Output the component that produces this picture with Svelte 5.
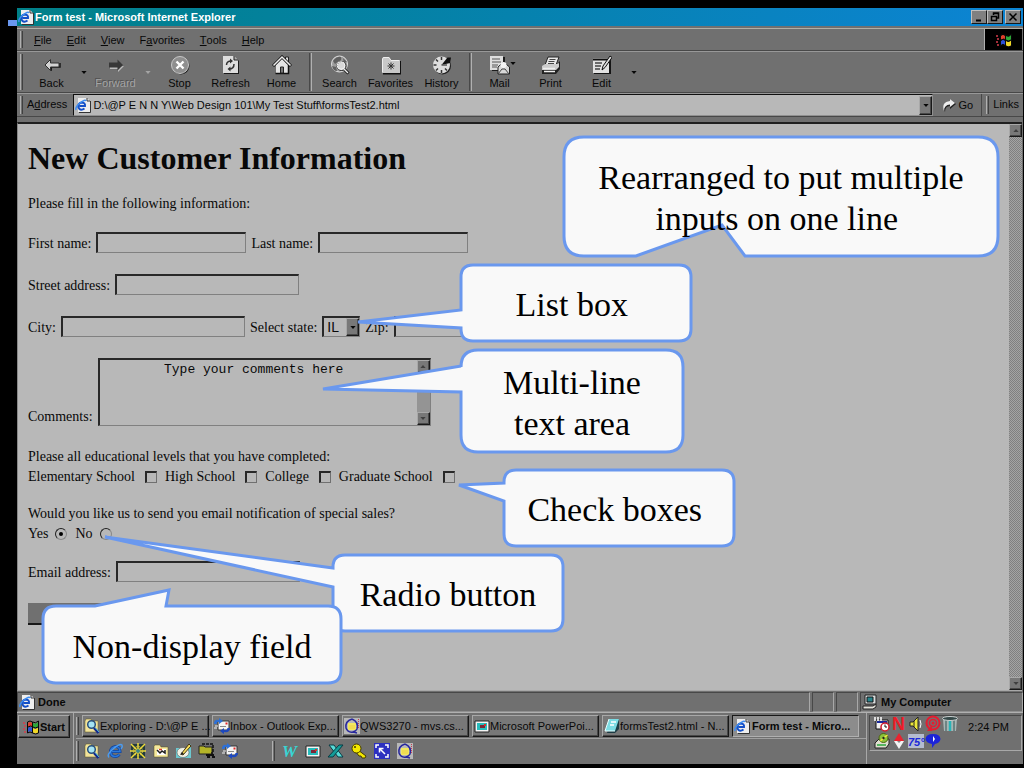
<script lang="ts">
	let state = $state('IL');
	let notify = $state('yes');
	let address = $state('D:\\@P E N N Y\\Web Design 101\\My Test Stuff\\formsTest2.html');
	let comments = $state('        Type your comments here');

	const menus = ['File', 'Edit', 'View', 'Favorites', 'Tools', 'Help'];
	// index of the underlined access key in each menu name
	const accessKeys = [0, 0, 0, 1, 0, 0];

	const toolGroups = [
		[
			{ label: 'Back', icon: 'back', drop: true },
			{ label: 'Forward', icon: 'forward', drop: true, disabled: true },
			{ label: 'Stop', icon: 'stop' },
			{ label: 'Refresh', icon: 'refresh' },
			{ label: 'Home', icon: 'home' }
		],
		[
			{ label: 'Search', icon: 'search' },
			{ label: 'Favorites', icon: 'favorites' },
			{ label: 'History', icon: 'history' }
		],
		[
			{ label: 'Mail', icon: 'mail' },
			{ label: 'Print', icon: 'print' },
			{ label: 'Edit', icon: 'edit', drop: true }
		]
	];

	const levels = ['Elementary School', 'High School', 'College', 'Graduate School'];

	const tasks = [
		{ label: 'Exploring - D:\\@P E ...', icon: 'explore' },
		{ label: 'Inbox - Outlook Exp...', icon: 'outlook' },
		{ label: 'QWS3270 - mvs.cs...', icon: 'qws' },
		{ label: 'Microsoft PowerPoi...', icon: 'slides' },
		{ label: 'formsTest2.html - N...', icon: 'notepad' },
		{ label: 'Form test - Micro...', icon: 'page', active: true }
	];

	const quickLeft = ['explore', 'ie', 'web', 'folder', 'paint', 'zip', 'outlook'];
	const quickRight = ['word', 'slides', 'excel', 'key', 'expand', 'qws'];
	const tray = [
		['schedule', 'norton', 'sound', 'radar', 'bin'],
		['disk', 'diamond', 'temp', 'talk']
	];

	// tail points are relative to the bubble's own top left corner
	const callouts = [
		{ x: 564, y: 137, w: 434, h: 119, r: 20, side: 'bottom', tail: [[181, 119], [158, 88], [72, 119]], lines: ['Rearranged to put multiple', 'inputs on one line '] },
		{ x: 461, y: 265, w: 230, h: 76, r: 12, side: 'left', tail: [[0, 63], [-103, 57], [0, 45]], lines: ['List box '] },
		{ x: 461, y: 350, w: 222, h: 102, r: 17, side: 'left', tail: [[0, 42], [-138, 39], [0, 16]], lines: ['Multi-line', 'text area'] },
		{ x: 504, y: 470, w: 230, h: 76, r: 12, side: 'left', tail: [[0, 31], [-45, 15], [0, 13]], lines: ['Check boxes '] },
		{ x: 333, y: 555, w: 230, h: 76, r: 12, side: 'left', tail: [[0, 32], [-228, -18], [0, 13]], lines: ['Radio button'] },
		{ x: 43, y: 606, w: 298, h: 77, r: 13, side: 'top', tail: [[52, 0], [126, -16], [123, 0]], lines: ['Non-display field'] }
	];

	function bubble({ w, h, r, side, tail }) {
		const points = tail.map((p) => `L${p[0]} ${p[1]}`).join(' ');
		return [
			`M${r} 0`,
			side === 'top' ? points : '',
			`H${w - r} Q${w} 0 ${w} ${r} V${h - r} Q${w} ${h} ${w - r} ${h}`,
			side === 'bottom' ? points : '',
			`H${r} Q0 ${h} 0 ${h - r}`,
			side === 'left' ? points : '',
			`V${r} Q0 0 ${r} 0 Z`
		].join(' ');
	}
</script>

{#snippet toolIcon(name)}
	<svg class="tool-icon" viewBox="0 0 20 20" aria-hidden="true">
		{#if name === 'back'}
			<path d="m9 16 .5-4H18V8" fill="none" stroke="#181818" stroke-width="1.500" />
			<path d="M3 10 8.500 4.500V8H17v4H8.500v3.500z" fill="#d4d4d4" stroke="#303030" />
		{:else if name === 'forward'}
			<path d="M18 11 12 17v-3H4v-2z" fill="#bbb" />
			<path d="M17 10 11.500 4.500v3H3v5h8.500v3z" fill="#383838" />
		{:else if name === 'stop'}
			<circle cx="11" cy="11" r="8.500" fill="#222" />
			<circle cx="10" cy="10" r="8.500" fill="#8f8f8f" stroke="#c8c8c8" />
			<path d="m6.500 6.500 7 7m0-7-7 7" stroke="#fff" stroke-width="2.400" />
		{:else if name === 'refresh'}
			<path d="M3 2h11l4 4v13H3z" fill="#1a1a1a" />
			<path d="M2 1h11l4 4v13H2z" fill="#ddd" />
			<path d="M13 1v4h4" fill="#aaa" stroke="#222" />
			<path d="M5.500 10q0-4 5-4M13 9q0 5-5 5" fill="none" stroke="#333" stroke-width="1.500" />
			<path d="m9 3.500 3 2.500-3 2.500zM9.500 11.500l-3 2.500 3 2.500z" fill="#333" />
		{:else if name === 'home'}
			<path d="M13.500 2h3v6h-3z" fill="#ddd" stroke="#222" />
			<path d="M4 10 10 3.500 16 10v8H4z" fill="#e4e4e4" />
			<path d="M16.500 10v8.500H3.500" fill="none" stroke="#111" stroke-width="1.500" />
			<path d="M1 11 10 2l9 9" fill="none" stroke="#111" stroke-width="3" />
			<path d="M1.500 10.500 10 2l8.500 8.500" fill="none" stroke="#eee" stroke-width="1.500" />
			<path d="M8.500 12h3v6h-3z" fill="#777" stroke="#222" />
		{:else if name === 'search'}
			<circle cx="9.500" cy="9" r="8" fill="#9c9c9c" stroke="#ddd" />
			<path d="M3 6q4-5 8-4 1 4-2 4L5 9zM2 11l4 1 1 4q-4 0-5-5zM13 3l4 4-3 1z" fill="#606060" />
			<circle cx="11.500" cy="11" r="4.500" fill="#d8d8d8" stroke="#222" />
			<circle cx="11" cy="10.500" r="3.800" fill="none" stroke="#f4f4f4" />
			<path d="m14.500 14.500 4 4" stroke="#111" stroke-width="3" />
			<path d="m14 14 4 4" stroke="#eee" stroke-width="1.500" />
		{:else if name === 'favorites'}
			<path d="M2 18.500h18V6" fill="none" stroke="#111" stroke-width="2" />
			<path d="M1 18V4l1-2h6l2 3h9v13z" fill="#c8c8c8" />
			<path d="M1.500 17V4l1-1.500H8l2 3h8" fill="none" stroke="#eee" />
			<path d="M10 7.500v7M6.500 11h7M7.500 8.500l5 5m0-5-5 5" stroke="#333" />
		{:else if name === 'history'}
			<circle cx="10.500" cy="11" r="8.500" fill="#222" />
			<circle cx="9.500" cy="10" r="8.500" fill="#ddd" />
			<path d="M9.500 2v3M9.500 15v3M1.500 10h3M4 4.500l2 2M4 15.500l2-2M15 15.500l-2-2" stroke="#333" stroke-width="1.500" />
			<path d="m9.500 10 6-7.500 3.500 0-1 5.500z" fill="#111" />
			<path d="M9.500 10H15" stroke="#555" stroke-width="1.500" />
		{:else if name === 'mail'}
			<path d="M2 2h13v14H2z" fill="#1c1c1c" />
			<path d="M0 1h13v14H0z" fill="#ddd" />
			<path d="M2 4h8M2 7h9M2 10h6M2 12h5" stroke="#555" />
			<path d="m8 12 5.500-5 6 5v7H8z" fill="#d8d8d8" stroke="#222" />
			<circle cx="13.500" cy="10" r="3" fill="#f4f4f4" />
			<path d="m8 19 4-5h3l4 5" fill="none" stroke="#444" />
		{:else if name === 'print'}
			<path d="m7 2 11 0-3 8H4z" fill="#e8e8e8" stroke="#222" />
			<path d="M8.500 4.500h6M7.500 6.500h6M7 8.500h6" stroke="#444" />
			<path d="m1 12 4-3h11l3-3v8l-4 5H1z" fill="#222" />
			<path d="m1 11 3-2h12l2-1v4l-3 3H1z" fill="#ccc" />
			<path d="M2 13.500h12M3 16.500h11" stroke="#eee" stroke-width="1.500" />
		{:else if name === 'edit'}
			<path d="M2 4h17v15H2z" fill="#151515" />
			<path d="M1 3h16v15H1z" fill="#e2e2e2" />
			<path d="M1 4.500h16" stroke="#111" stroke-width="2" />
			<path d="M3 8h7M3 11h6M3 14h5" stroke="#444" stroke-width="1.500" />
			<path d="m10 15 1-4 7-10 2 1.500-7 10z" fill="#ddd" stroke="#111" />
		{/if}
	</svg>
{/snippet}

{#snippet icon(name)}
	<svg class="icon" viewBox="0 0 16 16" aria-hidden="true">
		{#if name === 'page'}
			<path d="M3 1h9l3 3v11H3z" fill="#eee" />
			<path d="M12 1v3h3M15.500 4v11.500H4" fill="none" stroke="#333" />
			<path d="M9.500 11.500q-4 3-6-1-1-4 3-5 4 0 3.500 3.500H4.500" fill="none" stroke="#1450c8" stroke-width="2" />
			<path d="M1 13Q0 10 5 6t6-2" fill="none" stroke="#3c8cf0" stroke-width="1.500" />
		{:else if name === 'ie'}
			<path d="M12.500 11.500Q9 15 5 12.500 2 8 5 5q4-3 7 0 1 2 1 3.500H5" fill="none" stroke="#12439c" stroke-width="3" />
			<path d="M12.500 11.500Q9 15 5 12.500 2 8 5 5q4-3 7 0 1 2 1 3.500H5" fill="none" stroke="#2b78d8" stroke-width="1.500" />
			<path d="M2 14.500Q-1 12 6 6t9-4q1 2-1 4" fill="none" stroke="#4c9cf0" stroke-width="1.500" />
		{:else if name === 'explore'}
			<path d="M1 14V3l1-2h5l1 2h6v11z" fill="#f2e39a" stroke="#5c5420" stroke-width=".5" />
			<circle cx="7.500" cy="6.500" r="3.800" fill="#a5e4f4" stroke="#28507c" stroke-width="1.500" />
			<path d="m10 10 4.500 5" stroke="#14288c" stroke-width="2.500" />
			<path d="m11 9.500 4 4.500" stroke="#3cb4dc" />
		{:else if name === 'outlook'}
			<path d="M4 3h11v9H4z" fill="#f4f4f4" stroke="#333" />
			<path d="M11.500 4.500h2v2h-2z" fill="#e02828" />
			<path d="M6 8.500h6" stroke="#888" />
			<path d="M0 6q0-5 5-4V0l4 3-4 3V4Q3 3 2.500 6z" fill="#2c70d8" />
			<path d="M16 10q0 5-6 4v2l-4-3 4-3v2q3 1 3.500-2z" fill="#1c48c0" />
			<path d="M1 8h3M0 10h3" stroke="#eee" />
		{:else if name === 'qws'}
			<path d="M0 0h16v16H0z" fill="#b8b8b8" />
			<path d="M4 5h8v7H4z" fill="#f2e860" />
			<path d="M8 1Q1 3 2 10q2 5 7 4M8 1q7 3 5 10-1 2-4 3l4 1" fill="none" stroke="#28289c" stroke-width="1.500" />
			<path d="M14.500 1v9" stroke="#c83c50" stroke-dasharray="1 1" />
			<path d="M5 8h6M5 10h6" stroke="#e8b828" stroke-width=".5" />
		{:else if name === 'slides'}
			<path d="M1 3h14v11H1z" fill="#f4f4f4" stroke="#222" />
			<path d="M3 5h10v7H3z" fill="#28bcbc" />
			<path d="M6 7h5v3H6z" fill="#7c2838" />
			<path d="M10 6h2v2h-2z" fill="#e02c2c" />
		{:else if name === 'notepad'}
			<path d="m6 3 9-2v10l-4 4H3z" fill="#1c3c44" />
			<path d="M5 1h10l-4 12H1z" fill="#7cdce4" />
			<path d="m5 1-4 12h10" fill="none" stroke="#e8ffff" />
			<path d="M7 4h5M6 7h4" stroke="#fff" stroke-width="1.500" />
		{:else if name === 'web'}
			<path d="M1 1h14v14H1z" fill="#243c3c" />
			<path d="M8 0v16M0 8h16M1 1l14 14M15 1 1 15" stroke="#f0dc3c" stroke-width="1.500" />
			<circle cx="8" cy="8" r="4.500" fill="none" stroke="#d8c83c" stroke-dasharray="2 1" />
			<circle cx="8" cy="8" r="2" fill="#3c8484" />
		{:else if name === 'folder'}
			<path d="M1 14V3l1-1h5l1 2h7v10z" fill="#f4e89c" stroke="#554c1c" stroke-width=".5" />
			<path d="M4 6h9v6H4z" fill="#fff" />
			<path d="m4 7 3 3 2-2 3 2V7" fill="none" stroke="#1c1c1c" stroke-width="1.500" />
			<path d="M6 6.500h3" stroke="#d83c28" stroke-width="1.500" />
		{:else if name === 'paint'}
			<path d="M0 5h12l3-4v14H0z" fill="#6cc8d0" />
			<ellipse cx="7" cy="9.500" rx="6" ry="5" fill="#f0f0e4" stroke="#444" stroke-width=".5" />
			<path d="m5 11 8-10 2 2-8 9z" fill="#f4dc5c" stroke="#453410" />
			<path d="m4 12 2-3 2 2z" fill="#222" />
		{:else if name === 'zip'}
			<path d="M0 3h5l1 1h7v7H0z" fill="#b4b428" stroke="#222" />
			<path d="M3 1h11v9h-2" fill="none" stroke="#111" stroke-width="1.500" stroke-dasharray="3 1" />
			<path d="M7 12h8M8 14h3M13 14h3" stroke="#111" stroke-width="2" />
		{:else if name === 'word'}
			<text x="0" y="14" font-family="Liberation Serif" font-size="17" font-weight="700" font-style="italic" fill="#38d4d4">W</text>
		{:else if name === 'excel'}
			<path d="M1 2h5l9 12h-5z" fill="#58dcd8" stroke="#083c44" />
			<path d="M11 2h4L5 14H0z" fill="#149c98" stroke="#083c44" />
		{:else if name === 'key'}
			<path d="m7 7 8 6-1 2-3 0-1-2-2 0-3-4z" fill="#f4e800" stroke="#443c00" />
			<circle cx="5.500" cy="5.500" r="4.500" fill="#f4e800" stroke="#443c00" />
			<circle cx="4" cy="4" r="1" fill="#443c00" />
		{:else if name === 'expand'}
			<path d="M0 0h16v16H0z" fill="#2c30c0" />
			<path d="M2 5V2h3M11 2h3v3M14 11v3h-3M5 14H2v-3" fill="none" stroke="#fff" stroke-width="1.500" />
			<path d="m11 11-5-5M5.500 9.500v-4h4" fill="none" stroke="#fff" stroke-width="1.500" />
		{:else if name === 'schedule'}
			<path d="M2 4h12v9H2z" fill="#f0f0f0" stroke="#111" />
			<path d="M1 1v4M4 1v4M7 1v4" stroke="#fff" stroke-width="1.500" />
			<path d="M3 6h10" stroke="#18289c" stroke-width="2" />
			<circle cx="11" cy="11" r="4" fill="#fff" stroke="#d01c2c" stroke-width="1.500" />
			<path d="M11 8.500V11h2" fill="none" stroke="#111" />
		{:else if name === 'norton'}
			<text x="1" y="14" font-family="Liberation Sans" font-size="18" font-weight="700" fill="#ec1c28">N</text>
		{:else if name === 'sound'}
			<path d="M2 6h3l5-5v14l-5-5H2z" fill="#ece83c" stroke="#222" />
			<path d="M6 5v6" stroke="#222" />
			<path d="M12 4q2 4 0 8" fill="none" stroke="#fff" />
		{:else if name === 'radar'}
			<circle cx="8" cy="7" r="6.500" fill="none" stroke="#e41c30" stroke-width="2" />
			<circle cx="8" cy="7" r="3.500" fill="none" stroke="#e41c30" stroke-width="1.500" />
			<circle cx="8" cy="7" r="1.500" fill="#e41c30" />
			<path d="m7 9-5 6h5z" fill="#e41c30" />
		{:else if name === 'bin'}
			<path d="M1 3h14l-1 12H2z" fill="#a8b4b4" />
			<path d="M4 3v12M12 3v12" stroke="#587474" stroke-width="1.500" />
			<path d="M8 3v12" stroke="#28b4b8" stroke-width="2.500" />
			<ellipse cx="8" cy="2.500" rx="7.500" ry="2" fill="#344848" stroke="#c8d0d0" />
		{:else if name === 'disk'}
			<path d="m1 10 4-4h10v5l-3 4H1z" fill="#e0e0d0" stroke="#222" />
			<circle cx="9.500" cy="5" r="4.500" fill="#8cc43c" stroke="#4c6410" />
			<path d="m9.500 5 4-3M9.500 5l-3 3" stroke="#f4e83c" stroke-width="1.500" />
			<circle cx="9.500" cy="5" r="1.200" fill="#222" />
			<path d="M3 12h9" stroke="#28a83c" stroke-width="1.500" />
		{:else if name === 'diamond'}
			<path d="m8 0 5 8H3z" fill="#e82430" />
			<path d="m8 16 5-8H3z" fill="#f4f4f4" />
			<path d="m8 10 2-2H6z" fill="#888" />
		{:else if name === 'temp'}
			<path d="M0 1h16v14H0z" fill="#b4bcd0" />
			<text x="0" y="13" font-family="Liberation Sans" font-size="11" font-style="italic" font-weight="700" fill="#1c28d8">75°</text>
		{:else if name === 'talk'}
			<path d="M8 1q7 0 7.500 5-.5 4-5.500 5l-3 4v-4Q1 10 .5 6 1 1 8 1z" fill="#1c24d8" />
			<path d="m8 3 2 3-2 3z" fill="#fff" />
		{:else if name === 'computer'}
			<path d="M3 1h11v9H3z" fill="#d8dcdc" stroke="#222" />
			<path d="M5 3h6v5H5z" fill="#28848c" stroke="#111" />
			<path d="M1 12h10l3-2v3l-3 2H1z" fill="#e4e4dc" stroke="#222" />
		{:else if name === 'windows'}
			<path d="M5 4q2-2 4 0v4q-2-2-4 0z" fill="#e0402c" />
			<path d="M10 4q3 2 5-1v5q-2 2-5 0z" fill="#2ca838" />
			<path d="M5 9q2-2 4 0v4q-2-2-4 0z" fill="#2c50d8" />
			<path d="M10 9q3 2 5-.5v5q-2 2-5 0z" fill="#f0d828" />
			<path d="M4.500 14V3Q7 1 9.500 3q3 2 6-1v12q-3 2-6 0-2.500-2-5 0zM9.500 3v11M5 8q3-2 5 0t5 0" fill="none" stroke="#080808" />
			<path d="M0 4h3M1 7h3M0 10h3M1 13h3" stroke="#d83c4c" stroke-width="1.500" stroke-dasharray="2 1" />
		{/if}
	</svg>
{/snippet}

{#snippet arrow(up)}
	<svg class="arrow" viewBox="0 0 7 4" aria-hidden="true"><path d={up ? 'M0 4h7L3.500 0z' : 'M0 0h7L3.500 4z'} fill="currentColor" /></svg>
{/snippet}

<div class="slide">
	<span class="accent"></span>
	<div class="window">
		<header class="title">
			{@render icon('page')}
			<span>Form test - Microsoft Internet Explorer</span>
			<div class="controls">
				<button aria-label="Minimize"><svg viewBox="0 0 10 10"><path d="M2 8.500h5" stroke="#000" stroke-width="2" /></svg></button>
				<button aria-label="Restore"><svg viewBox="0 0 10 10"><path d="M3.500 3V1h5v5H7M1.500 4.500h5v4h-5zM3 1.500h6M1 4.500h6" fill="none" stroke="#000" stroke-width="1.500" /></svg></button>
				<button class="close" aria-label="Close"><svg viewBox="0 0 10 10"><path d="m1.500 1.500 7 7m0-7-7 7" stroke="#000" stroke-width="1.500" /></svg></button>
			</div>
		</header>

		<nav class="menubar">
			<i class="grip"></i>
			{#each menus as menu, i}
				<button>{menu.slice(0, accessKeys[i])}<u>{menu[accessKeys[i]]}</u>{menu.slice(accessKeys[i] + 1)}</button>
			{/each}
			<div class="throbber">{@render icon('windows')}</div>
		</nav>

		<div class="toolbar">
			<i class="grip"></i>
			{#each toolGroups as group, i}
				{#if i > 0}<i class="divider"></i>{/if}
				{#each group as tool}
					<button class="tool" disabled={tool.disabled}>
						{@render toolIcon(tool.icon)}
						<span>{tool.label}</span>
						{#if tool.icon === 'mail'}<i class="mail-drop">{@render arrow(false)}</i>{/if}
					</button>
					{#if tool.drop}
						<button class="drop" disabled={tool.disabled} aria-label="{tool.label} list">{@render arrow(false)}</button>
					{/if}
				{/each}
			{/each}
		</div>

		<div class="addressbar">
			<i class="grip"></i>
			<label for="address">A<u>d</u>dress</label>
			<div class="combo">
				{@render icon('page')}
				<input id="address" bind:value={address} />
				<button class="raised" aria-label="Show addresses">{@render arrow(false)}</button>
			</div>
			<button class="go">
				<svg class="icon" viewBox="0 0 16 16" aria-hidden="true">
					<path d="M4 15Q0 6 9 5V2l6 5-6 5V9q-5 0-5 6z" fill="#222" />
					<path d="M3 14Q0 5 9 4V2l5 4-5 4V7.500Q3 8 3 14z" fill="#eee" />
				</svg>
				Go
			</button>
			<i class="grip"></i>
			<a class="links" href="#links">Links</a>
		</div>

		<div class="viewport">
			<form onsubmit={(e) => e.preventDefault()}>
				<h1>New Customer Information</h1>
				<p>Please fill in the following information:</p>
				<div class="row">
					<label for="first">First name:</label>
					<input id="first" class="field short" />
					<label for="last">Last name:</label>
					<input id="last" class="field short" />
				</div>
				<div class="row">
					<label for="street">Street address:</label>
					<input id="street" class="field" />
				</div>
				<div class="row">
					<label for="city">City:</label>
					<input id="city" class="field" />
					<label for="state">Select state:</label>
					<div class="select">
						<select id="state" bind:value={state}>
							<option>IL</option>
							<option>IN</option>
							<option>WI</option>
						</select>
						<span class="raised">{@render arrow(false)}</span>
					</div>
					<label for="zip">Zip:</label>
					<input id="zip" class="field zip" />
				</div>
				<div class="row comments">
					<label for="comments">Comments:</label>
					<div class="area">
						<textarea id="comments" bind:value={comments}></textarea>
						<div class="scrollbar">
							<button type="button" class="raised" aria-label="Scroll up">{@render arrow(true)}</button>
							<button type="button" class="raised" aria-label="Scroll down">{@render arrow(false)}</button>
						</div>
					</div>
				</div>
				<div class="group">
					<p>Please all educational levels that you have completed:</p>
					<div class="choices">
						{#each levels as level}
							<label>{level}<input type="checkbox" name="level" value={level} /></label>
						{/each}
					</div>
				</div>
				<div class="group">
					<p>Would you like us to send you email notification of special sales?</p>
					<div class="choices radios">
						<label>Yes<input type="radio" name="notify" value="yes" bind:group={notify} /></label>
						<label>No<input type="radio" name="notify" value="no" bind:group={notify} /></label>
					</div>
				</div>
				<div class="row">
					<label for="email">Email address:</label>
					<input id="email" class="field" />
				</div>
				<input type="hidden" name="source" value="formsTest2" />
				<button class="submit" aria-label="Submit"></button>
			</form>
			<div class="scrollbar page-scroll">
				<button class="raised" aria-label="Page up">{@render arrow(true)}</button>
				<button class="raised" aria-label="Page down">{@render arrow(false)}</button>
			</div>
		</div>

		<footer class="status">
			<div class="pane main">{@render icon('page')}Done</div>
			<div class="pane"></div>
			<div class="pane"></div>
			<div class="pane zone">{@render icon('computer')}My Computer</div>
		</footer>

		<div class="taskbar">
			<div><button class="raised start">{@render icon('windows')}Start</button></div>
			<div class="bands">
				<div class="band">
					<i class="grip"></i>
					{#each tasks as task}
						<button class="raised task" class:active={task.active}>
							{@render icon(task.icon)}<span>{task.label}</span>
						</button>
					{/each}
				</div>
				<div class="band quick">
					<div class="quick-left">
						<i class="grip"></i>
						{#each quickLeft as name}
							<button aria-label={name}>{@render icon(name)}</button>
						{/each}
					</div>
					<i class="grip"></i>
					{#each quickRight as name}
						<button aria-label={name}>{@render icon(name)}</button>
					{/each}
				</div>
			</div>
			<div class="tray">
				<div>
					{#each tray as line}
						<div class="tray-line">
							{#each line as name}{@render icon(name)}{/each}
						</div>
					{/each}
				</div>
				<time>2:24 PM</time>
			</div>
		</div>
	</div>

	{#each callouts as callout}
		<div class="callout" style="left: {callout.x}px; top: {callout.y}px; width: {callout.w}px; height: {callout.h}px">
			<svg aria-hidden="true"><path d={bubble(callout)} /></svg>
			<p>
				{#each callout.lines as line}<span>{line}</span>{/each}
			</p>
		</div>
	{/each}
</div>

<style>
	:global(body) { margin: 0; background: #000; }
	.slide {
		position: relative;
		box-sizing: border-box;
		min-height: 100vh;
		display: flex;
		padding: 8px 1px 4px 17px;
		background: #000;
		color: #080808;
		font: 11px/14px "Liberation Sans", Arial, sans-serif;
		overflow: hidden;
	}
	.accent { position: absolute; left: 8px; top: 20px; width: 9px; height: 6px; background: #6a98f0; }
	.window {
		flex: 1;
		min-width: 0;
		display: flex;
		flex-direction: column;
		background: #707070;
	}
	button {
		display: flex;
		align-items: center;
		justify-content: center;
		border: 0;
		padding: 0;
		background: none;
		color: inherit;
		font: inherit;
	}
	input, select, textarea {
		box-sizing: border-box;
		min-width: 0;
		margin: 0;
		border: 0;
		border-radius: 0;
		background: none;
		color: inherit;
		font: inherit;
		outline: 0;
	}
	.icon { width: 16px; height: 16px; flex: none; overflow: visible; }
	.arrow { width: 7px; height: 4px; flex: none; }
	.raised {
		box-sizing: border-box;
		background: #787878;
		border: 1px solid;
		border-color: #a8a8a8 #181818 #181818 #a8a8a8;
		box-shadow: inset -1px -1px #484848;
	}
	.grip {
		flex: none;
		width: 1px;
		margin: 2px 0;
		border-left: 1px solid #b0b0b0;
		border-right: 1px solid #404040;
	}

	.title {
		display: flex;
		align-items: center;
		gap: 1px;
		height: 18px;
		padding: 0 2px 0 1px;
		background: linear-gradient(90deg, #008088, #0c84d4);
		color: #fff;
		font-weight: 700;
	}
	.controls { display: flex; margin-left: auto; }
	.controls button {
		box-sizing: border-box;
		width: 16px;
		height: 14px;
		background: #808080;
		border: 1px solid;
		border-color: #c0c0c0 #181818 #181818 #c0c0c0;
	}
	.controls svg { width: 10px; height: 10px; }
	.controls .close { margin-left: 2px; }

	.menubar {
		display: flex;
		height: 21px;
		margin-top: 2px;
		padding-left: 3px;
		border-top: 1px solid #b0b0a8;
		border-bottom: 1px solid #484848;
	}
	.menubar button { margin-left: 15px; }
	.menubar .grip + button { margin-left: 11px; }
	.throbber {
		display: grid;
		place-items: center;
		width: 37px;
		margin: 0 1px 0 auto;
		background: #000;
		border-left: 1px solid #b0b0b0;
	}

	.toolbar {
		display: flex;
		height: 40px;
		padding-left: 3px;
		border-top: 1px solid #989898;
		border-bottom: 1px solid #484848;
	}
	.toolbar .grip { margin-right: 3px; }
	.tool {
		position: relative;
		flex-direction: column;
		width: 51px;
		gap: 1px;
	}
	.tool-icon { width: 20px; height: 20px; }
	.tool:disabled, .drop:disabled { color: #a4a4a4; text-shadow: -1px -1px #505050; }
	.drop { width: 13px; }
	.drop .arrow, .mail-drop .arrow, .raised .arrow { width: 6px; height: 3px; }
	.mail-drop { position: absolute; left: 36px; top: 2px; }
	.divider {
		width: 1px;
		margin: 1px 2px;
		border-left: 1px solid #484848;
		border-right: 1px solid #b0b0b0;
	}

	.addressbar {
		display: flex;
		height: 22px;
		padding: 0 4px 0 3px;
		border-top: 1px solid #989898;
		border-bottom: 1px solid #484848;
	}
	.addressbar label { margin: 3px 6px 0 4px; }
	.combo {
		flex: 1;
		display: flex;
		align-items: center;
		gap: 1px;
		min-width: 0;
		padding-left: 1px;
		background: #b8b8b8;
		border: 1px solid;
		border-color: #101010 #909090 #909090 #101010;
	}
	.combo input { flex: 1; height: 18px; padding: 0 1px; }
	.combo button { width: 13px; height: 19px; }
	.go { gap: 1px; width: 49px; margin-right: 4px; border-right: 1px solid #484848; }
	.links { margin: 3px 0 0 4px; color: inherit; text-decoration: none; }

	.viewport {
		flex: 1;
		display: flex;
		margin: 5px 1px 0 0;
		border: 1px solid;
		border-width: 2px 0 1px 1px;
		border-color: #202020 #b8b8b8 #a8a8a8 #888;
		background: #b8b8b8;
	}
	form {
		flex: 1;
		padding: 18px 0 55px 10px;
		font: 14px/20px "Liberation Serif", "Times New Roman", serif;
	}
	h1 { margin: 0 0 20px; font-size: 32px; line-height: 32px; }
	p { margin: 0; }
	form > p { margin-bottom: 18px; }
	.row {
		display: flex;
		align-items: flex-start;
		gap: 5px;
		height: 22px;
		margin-bottom: 20px;
	}
	.row label { align-self: flex-end; }
	.field, .area, .select {
		width: 184px;
		height: 21px;
		border: 2px solid;
		border-width: 2px 1px 1px 2px;
		border-color: #282828 #808080 #808080 #282828;
	}
	.field.short { width: 150px; }
	.field.zip { width: 90px; }
	.select {
		box-sizing: border-box;
		display: grid;
		grid-template-columns: 1fr 13px;
		width: 38px;
	}
	.select select {
		grid-area: 1 / 1 / 2 / 3;
		appearance: none;
		padding: 0 3px;
		font: 14px/18px "Liberation Sans", Arial, sans-serif;
	}
	.select .raised {
		grid-area: 1 / 2;
		display: grid;
		place-items: center;
		pointer-events: none;
	}
	.comments { height: 69px; }
	.area {
		box-sizing: border-box;
		display: flex;
		width: 333px;
		height: 68px;
	}
	textarea {
		flex: 1;
		padding: 2px;
		resize: none;
		overflow: hidden;
		font: 13px/15px "Liberation Mono", "Courier New", monospace;
	}
	.scrollbar {
		display: flex;
		flex-direction: column;
		justify-content: space-between;
		width: 13px;
		background: #949494;
	}
	.scrollbar button { height: 13px; color: #404040; }
	.group { margin-bottom: 17px; }
	.choices { display: flex; gap: 8px; }
	.choices label { display: flex; align-items: center; gap: 10px; }
	.choices input {
		appearance: none;
		width: 12px;
		height: 12px;
		border: 2px solid;
		border-width: 2px 1px 1px 2px;
		border-color: #282828 #707070 #707070 #282828;
	}
	.radios label { gap: 7px; }
	.radios input {
		display: grid;
		place-items: center;
		border-width: 1px;
		border-radius: 50%;
		border-color: #202020 #888 #888 #202020;
	}
	.radios input:checked::before {
		content: "";
		width: 4px;
		height: 4px;
		border-radius: 50%;
		background: #000;
	}
	.submit {
		width: 90px;
		height: 22px;
		background: #707070;
		border-bottom: 2px solid #181818;
	}
	.page-scroll { background: repeating-conic-gradient(#808080 0 25%, #a4a4a4 0 50%) 0 0 / 2px 2px; }

	.status {
		display: flex;
		gap: 2px;
		height: 20px;
		margin-top: 1px;
		font-weight: 700;
	}
	.pane {
		box-sizing: border-box;
		display: flex;
		align-items: center;
		gap: 3px;
		width: 22px;
		border: 1px solid;
		border-color: #484848 #a8a8a8 #909090 #484848;
	}
	.pane.main { flex: 1; padding-left: 1px; }
	.pane.zone { width: 163px; padding-left: 1px; }

	.taskbar {
		display: flex;
		height: 51px;
		padding: 0 1px;
		border-top: 1px solid #b0b0b0;
	}
	.start { width: 52px; height: 23px; gap: 1px; margin: 2px 3px 0 0; font-weight: 700; }
	.bands {
		flex: 1;
		min-width: 0;
		padding-left: 2px;
		border-left: 1px solid #a8a8a8;
		border-right: 1px solid #a8a8a8;
	}
	.band {
		box-sizing: border-box;
		display: flex;
		gap: 3px;
		height: 25px;
		padding: 2px 7px 1px 0;
	}
	.task {
		flex: 1;
		min-width: 0;
		justify-content: flex-start;
		padding-left: 1px;
	}
	.task span { white-space: nowrap; }
	.task.active {
		gap: 2px;
		background: #8c8c8c;
		border-color: #181818 #b0b0b0 #b0b0b0 #181818;
		box-shadow: none;
		font-weight: 700;
	}
	.quick { gap: 7px; border-top: 1px solid #a0a0a0; padding: 0; }
	.quick-left { display: flex; gap: 7px; width: 189px; }
	.quick-left .grip { margin-right: -2px; }
	.tray {
		box-sizing: border-box;
		display: flex;
		justify-content: space-between;
		width: 153px;
		height: 36px;
		margin: 2px 0 0 2px;
		padding: 0 12px 0 4px;
		border: 1px solid;
		border-color: #484848 #a8a8a8 #a8a8a8 #484848;
	}
	.tray-line { display: flex; gap: 1px; height: 17px; }
	.tray time { margin-top: 4px; }

	.callout {
		position: absolute;
		display: grid;
		grid-template: 100% / 100%;
		place-items: center;
		color: #000;
		font: 34px/41px "Liberation Serif", "Times New Roman", serif;
		text-align: center;
	}
	.callout svg {
		grid-area: 1 / 1;
		width: 100%;
		height: 100%;
		overflow: visible;
		fill: #f9f9f9;
		stroke: #6a98ee;
		stroke-width: 3;
	}
	.callout p { grid-area: 1 / 1; z-index: 1; padding-top: 3px; }
	.callout span { display: block; white-space: pre; }
</style>
